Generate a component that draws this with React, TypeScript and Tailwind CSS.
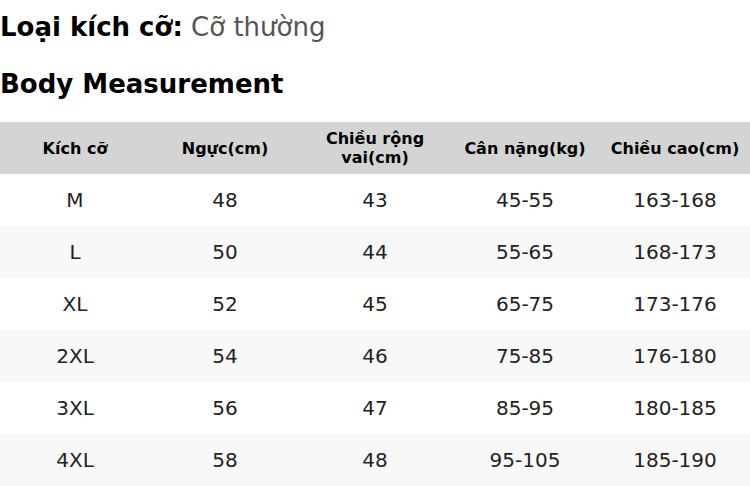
const headers = ["Kích cỡ", "Ngực(cm)", "Chiều rộng vai(cm)", "Cân nặng(kg)", "Chiều cao(cm)"];

const rows = [
  ["M", "48", "43", "45-55", "163-168"],
  ["L", "50", "44", "55-65", "168-173"],
  ["XL", "52", "45", "65-75", "173-176"],
  ["2XL", "54", "46", "75-85", "176-180"],
  ["3XL", "56", "47", "85-95", "180-185"],
  ["4XL", "58", "48", "95-105", "185-190"],
];

const App = () => {
  return (
    <div className="w-[750px] bg-white font-['DejaVu_Sans',sans-serif] text-black">
      <div className="text-[26px] leading-[55px]">
        <span className="font-bold">Loại kích cỡ:</span>{" "}
        <span className="text-[#555]">Cỡ thường</span>
      </div>
      <div className="text-[26px] font-bold leading-[58px]">Body Measurement</div>

      <div className="mt-[9px]">
        <div className="grid grid-cols-5 h-[52px] bg-[#d4d4d4]">
          {headers.map((h) => (
            <div key={h} className="flex items-center justify-center text-center px-2 text-[16px] font-bold leading-[19px]">
              {h}
            </div>
          ))}
        </div>
        {rows.map((r, i) => (
          <div key={r[0]} className={`grid grid-cols-5 h-[52px] ${i % 2 === 1 ? "bg-[#f8f8f8]" : "bg-white"}`}>
            {r.map((c, j) => (
              <div key={j} className="flex items-center justify-center text-[20px] text-[#222]">
                {c}
              </div>
            ))}
          </div>
        ))}
      </div>
    </div>
  );
};

export default App;
